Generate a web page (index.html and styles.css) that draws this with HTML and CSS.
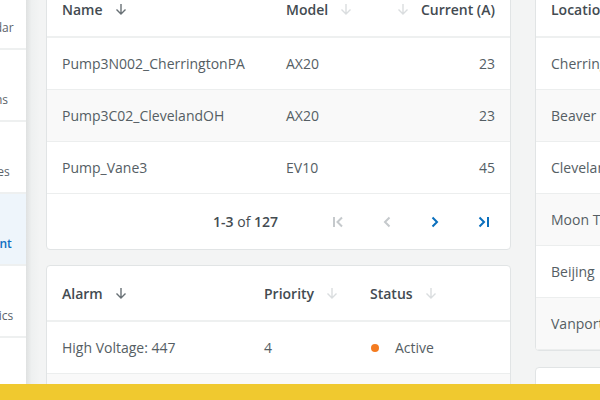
FILE: index.html
```html
<!DOCTYPE html>
<html lang="en">
<head>
<meta charset="utf-8">
<title>Equipment</title>
<link rel="stylesheet" href="styles.css">
</head>
<body>
<div class="app">
  <nav class="sidebar">
    <a class="nav-item"><svg class="nav-icon" viewBox="0 0 24 24"><rect x="4" y="5" width="16" height="15" rx="2"/></svg><span>Calendar</span></a>
    <a class="nav-item"><svg class="nav-icon" viewBox="0 0 24 24"><path d="M6 17h12l-2-3V10a4 4 0 0 0-8 0v4z"/></svg><span>Alarms</span></a>
    <a class="nav-item"><svg class="nav-icon" viewBox="0 0 24 24"><rect x="5" y="5" width="14" height="14" rx="2"/></svg><span>Devices</span></a>
    <a class="nav-item active"><svg class="nav-icon" viewBox="0 0 24 24"><circle cx="12" cy="12" r="7"/></svg><span>Content</span></a>
    <a class="nav-item"><svg class="nav-icon" viewBox="0 0 24 24"><path d="M5 19V9M12 19V5M19 19v-7"/></svg><span>Analytics</span></a>
    <a class="nav-item"><svg class="nav-icon" viewBox="0 0 24 24"><circle cx="12" cy="12" r="3"/></svg><span>Settings</span></a>
  </nav>
  <div class="shade"></div>
  <main class="content">
    <div class="col-main">
      <section class="card">
        <div class="row head cols-equip">
          <div class="th">Name <svg class="sort on" viewBox="0 0 12 12"><path d="M6 1v10M1.5 6.5 6 11l4.5-4.5"/></svg></div>
          <div class="th">Model <svg class="sort" viewBox="0 0 12 12"><path d="M6 1v10M1.5 6.5 6 11l4.5-4.5"/></svg></div>
          <div class="th num"><svg class="sort" viewBox="0 0 12 12"><path d="M6 1v10M1.5 6.5 6 11l4.5-4.5"/></svg> Current (A)</div>
        </div>
        <div class="row cols-equip"><div>Pump3N002_CherringtonPA</div><div>AX20</div><div class="num">23</div></div>
        <div class="row alt cols-equip"><div>Pump3C02_ClevelandOH</div><div>AX20</div><div class="num">23</div></div>
        <div class="row cols-equip"><div>Pump_Vane3</div><div>EV10</div><div class="num">45</div></div>
        <div class="pager">
          <span class="count"><b>1-3</b> of <b>127</b></span>
          <button class="pg off" aria-label="First page"><svg viewBox="0 0 16 16"><path d="M3 3v10"/><path d="M11 3.5 6.5 8l4.5 4.5"/></svg></button>
          <button class="pg off" aria-label="Previous page"><svg viewBox="0 0 16 16"><path d="M10.5 3.5 6 8l4.5 4.5"/></svg></button>
          <button class="pg" aria-label="Next page"><svg viewBox="0 0 16 16"><path d="M5.5 3.5 10 8l-4.5 4.5"/></svg></button>
          <button class="pg" aria-label="Last page"><svg viewBox="0 0 16 16"><path d="M4.5 3.5 9 8l-4.5 4.5"/><path d="M13 3v10"/></svg></button>
        </div>
      </section>
      <section class="card">
        <div class="row head cols-alarm">
          <div class="th">Alarm <svg class="sort on" viewBox="0 0 12 12"><path d="M6 1v10M1.5 6.5 6 11l4.5-4.5"/></svg></div>
          <div class="th">Priority <svg class="sort" viewBox="0 0 12 12"><path d="M6 1v10M1.5 6.5 6 11l4.5-4.5"/></svg></div>
          <div class="th">Status <svg class="sort" viewBox="0 0 12 12"><path d="M6 1v10M1.5 6.5 6 11l4.5-4.5"/></svg></div>
        </div>
        <div class="row cols-alarm"><div>High Voltage: 447</div><div>4</div><div class="status"><span class="dot"></span>Active</div></div>
        <div class="row alt cols-alarm"><div>Low Pressure: 212</div><div>2</div><div class="status"><span class="dot"></span>Active</div></div>
      </section>
    </div>
    <div class="col-side">
      <section class="card">
        <div class="row head"><div class="th">Location</div></div>
        <div class="row"><div>Cherrington, PA</div></div>
        <div class="row alt"><div>Beaver Falls, PA</div></div>
        <div class="row"><div>Cleveland, OH</div></div>
        <div class="row alt"><div>Moon Township, PA</div></div>
        <div class="row"><div>Beijing</div></div>
        <div class="row alt"><div>Vanport, PA</div></div>
      </section>
      <section class="card stub"></section>
    </div>
  </main>
</div>
<div class="footer-bar"></div>
</body>
</html>
```

FILE: styles.css
```css
* { box-sizing: border-box; }

html, body {
  margin: 0;
  height: 400px;
  overflow: hidden;
  background: #f3f4f4;
  font-family: "Open Sans", "Liberation Sans", sans-serif;
  color: #555e64;
}

.app {
  display: flex;
  align-items: flex-start;
  height: 400px;
}

/* sidebar – partially scrolled out to the left */
.sidebar {
  flex: none;
  width: 75px;
  margin-left: -49px;
  margin-top: -22px;
  height: 422px;
  background: #fff;
  display: flex;
  flex-direction: column;
}

.nav-item {
  height: 72px;
  flex: none;
  display: flex;
  flex-direction: column;
  align-items: center;
  justify-content: center;
  gap: 4px;
  border-bottom: 2px solid #eef0f0;
  font-size: 12px;
  color: #5b646a;
  white-space: nowrap;
}

.nav-icon {
  width: 24px;
  height: 24px;
  fill: none;
  stroke: currentColor;
  stroke-width: 1.5;
}

.nav-item.active {
  background: #eef5fb;
  color: #0f6fc2;
  font-weight: 600;
}

.shade {
  flex: none;
  width: 14px;
  height: 400px;
  background: linear-gradient(to right, #dfe1e1, #eef0f0 40%, #f3f4f4);
}

.content {
  flex: none;
  display: flex;
  align-items: flex-start;
  gap: 24px;
  padding-left: 6px;
  margin-top: -19px;
}

.col-main {
  width: 465px;
  display: flex;
  flex-direction: column;
  gap: 15px;
}

.col-side {
  width: 300px;
  display: flex;
  flex-direction: column;
  gap: 16px;
}

.card {
  background: #fff;
  border: 1px solid #e1e4e5;
  border-radius: 4px;
  overflow: hidden;
}

.card.stub { height: 60px; }

.row {
  display: grid;
  grid-template-columns: 1fr;
  align-items: center;
  height: 52px;
  padding: 0 15px;
  border-bottom: 1px solid #eceeee;
  font-size: 14px;
  white-space: nowrap;
}

.row.alt { background: #f9f9f9; }

.row.head {
  height: 56px;
  border-bottom: 2px solid #eef0f0;
  color: #434b51;
}

.cols-equip { grid-template-columns: 224px 1fr auto; }
.cols-alarm { grid-template-columns: 202px 106px 1fr; }

.th {
  display: flex;
  align-items: center;
  gap: 12px;
  font-weight: 600;
}

.num { text-align: right; justify-content: flex-end; }

.sort {
  width: 12px;
  height: 12px;
  fill: none;
  stroke: #dadddf;
  stroke-width: 1.4;
}

.sort.on { stroke: #687075; }

.status {
  display: flex;
  align-items: center;
  gap: 16px;
  padding-left: 1px;
}

.dot {
  width: 8px;
  height: 8px;
  border-radius: 50%;
  background: #f47b20;
}

.pager {
  height: 55px;
  display: flex;
  align-items: center;
  justify-content: flex-end;
  padding-right: 3px;
  font-size: 14px;
  color: #434b51;
}

.count { margin-right: 37px; }
.count b { font-weight: 600; }

.pg {
  width: 48px;
  height: 40px;
  border: 0;
  background: none;
  padding: 0;
  display: flex;
  align-items: center;
  justify-content: center;
  color: #0a6fbd;
}

.pg.off { color: #c5c9cc; }

.pg svg {
  width: 16px;
  height: 16px;
  fill: none;
  stroke: currentColor;
  stroke-width: 2;
}

.footer-bar {
  position: fixed;
  left: 0;
  right: 0;
  bottom: 0;
  height: 16px;
  background: #f0c92f;
}
```
